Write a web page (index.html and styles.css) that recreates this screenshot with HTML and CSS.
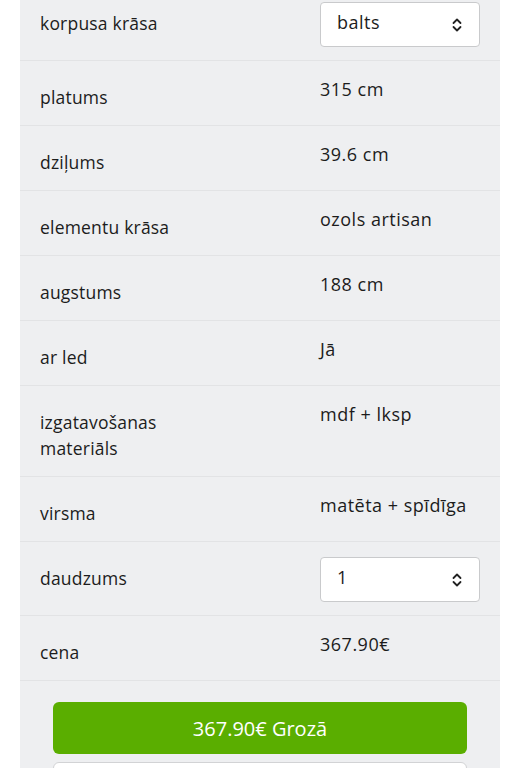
FILE: index.html
```html
<!DOCTYPE html>
<html lang="lv">
<head>
    <meta charset="UTF-8">
    <meta name="viewport" content="width=device-width, initial-scale=1.0">
    <title>Produkta parametri</title>
    <link rel="stylesheet" href="styles.css">
</head>
<body>
    <div class="params">
        <div class="row">
            <div class="label">korpusa krāsa</div>
            <div class="value">
                <div class="select-wrap">
                    <select class="select">
                        <option>balts</option>
                    </select>
                    <svg class="chevron" width="10" height="14" viewBox="0 0 10 14">
                        <path d="M1.5 5 L5 1.5 L8.5 5 M1.5 9 L5 12.5 L8.5 9" fill="none" stroke="#222" stroke-width="1.8" stroke-linecap="round" stroke-linejoin="round"/>
                    </svg>
                </div>
            </div>
        </div>
        <div class="row">
            <div class="label">platums</div>
            <div class="value text">315 cm</div>
        </div>
        <div class="row">
            <div class="label">dziļums</div>
            <div class="value text">39.6 cm</div>
        </div>
        <div class="row">
            <div class="label">elementu krāsa</div>
            <div class="value text">ozols artisan</div>
        </div>
        <div class="row">
            <div class="label">augstums</div>
            <div class="value text">188 cm</div>
        </div>
        <div class="row">
            <div class="label">ar led</div>
            <div class="value text">Jā</div>
        </div>
        <div class="row">
            <div class="label">izgatavošanas materiāls</div>
            <div class="value text">mdf + lksp</div>
        </div>
        <div class="row">
            <div class="label">virsma</div>
            <div class="value text">matēta + spīdīga</div>
        </div>
        <div class="row">
            <div class="label">daudzums</div>
            <div class="value">
                <div class="select-wrap">
                    <select class="select">
                        <option>1</option>
                        <option>2</option>
                        <option>3</option>
                    </select>
                    <svg class="chevron" width="10" height="14" viewBox="0 0 10 14">
                        <path d="M1.5 5 L5 1.5 L8.5 5 M1.5 9 L5 12.5 L8.5 9" fill="none" stroke="#222" stroke-width="1.8" stroke-linecap="round" stroke-linejoin="round"/>
                    </svg>
                </div>
            </div>
        </div>
        <div class="row">
            <div class="label">cena</div>
            <div class="value text">367.90€</div>
        </div>

        <div class="actions">
            <button class="btn btn-cart">367.90€ Grozā</button>
            <button class="btn btn-secondary"></button>
        </div>
    </div>
</body>
</html>
```

FILE: styles.css
```css
body {
    margin: 0;
    background-color: #fff;
    font-family: 'Open Sans', 'Noto Sans', sans-serif;
    color: #1c1c1c;
}
.params {
    margin: -13px 20px 0;
    background-color: #eeeff1;
}
.row {
    display: flex;
    border-bottom: 1px solid #e2e3e5;
}
.label {
    width: 280px;
    box-sizing: border-box;
    padding: 23px 80px 15px 20px;
    font-size: 17.5px;
    letter-spacing: 0.2px;
    line-height: 26px;
}
.value {
    flex: 1;
    padding: 15px 20px 13px 20px;
    font-size: 18px;
    letter-spacing: 0.5px;
    line-height: 26px;
}
.value.text {
    padding-top: 15px;
}
.select-wrap {
    position: relative;
    width: 160px;
}
.select {
    display: block;
    width: 100%;
    height: 45px;
    box-sizing: border-box;
    appearance: none;
    -webkit-appearance: none;
    background-color: #fff;
    border: 1px solid #c9cacc;
    border-radius: 4px;
    padding: 0 30px 6px 16px;
    font-family: inherit;
    font-size: 18px;
    letter-spacing: 0.5px;
    color: #1c1c1c;
}
.chevron {
    position: absolute;
    right: 18px;
    top: 16px;
    pointer-events: none;
}
.actions {
    padding: 21px 33px 0;
}
.btn {
    display: block;
    width: 100%;
    box-sizing: border-box;
    border-radius: 6px;
    font-family: inherit;
    font-size: 20px;
    cursor: pointer;
}
.btn-cart {
    height: 52px;
    background-color: #5aae00;
    color: #fff;
    border: none;
}
.btn-secondary {
    margin-top: 8px;
    height: 52px;
    background-color: #fff;
    border: 1px solid #d2d3d5;
}
```
